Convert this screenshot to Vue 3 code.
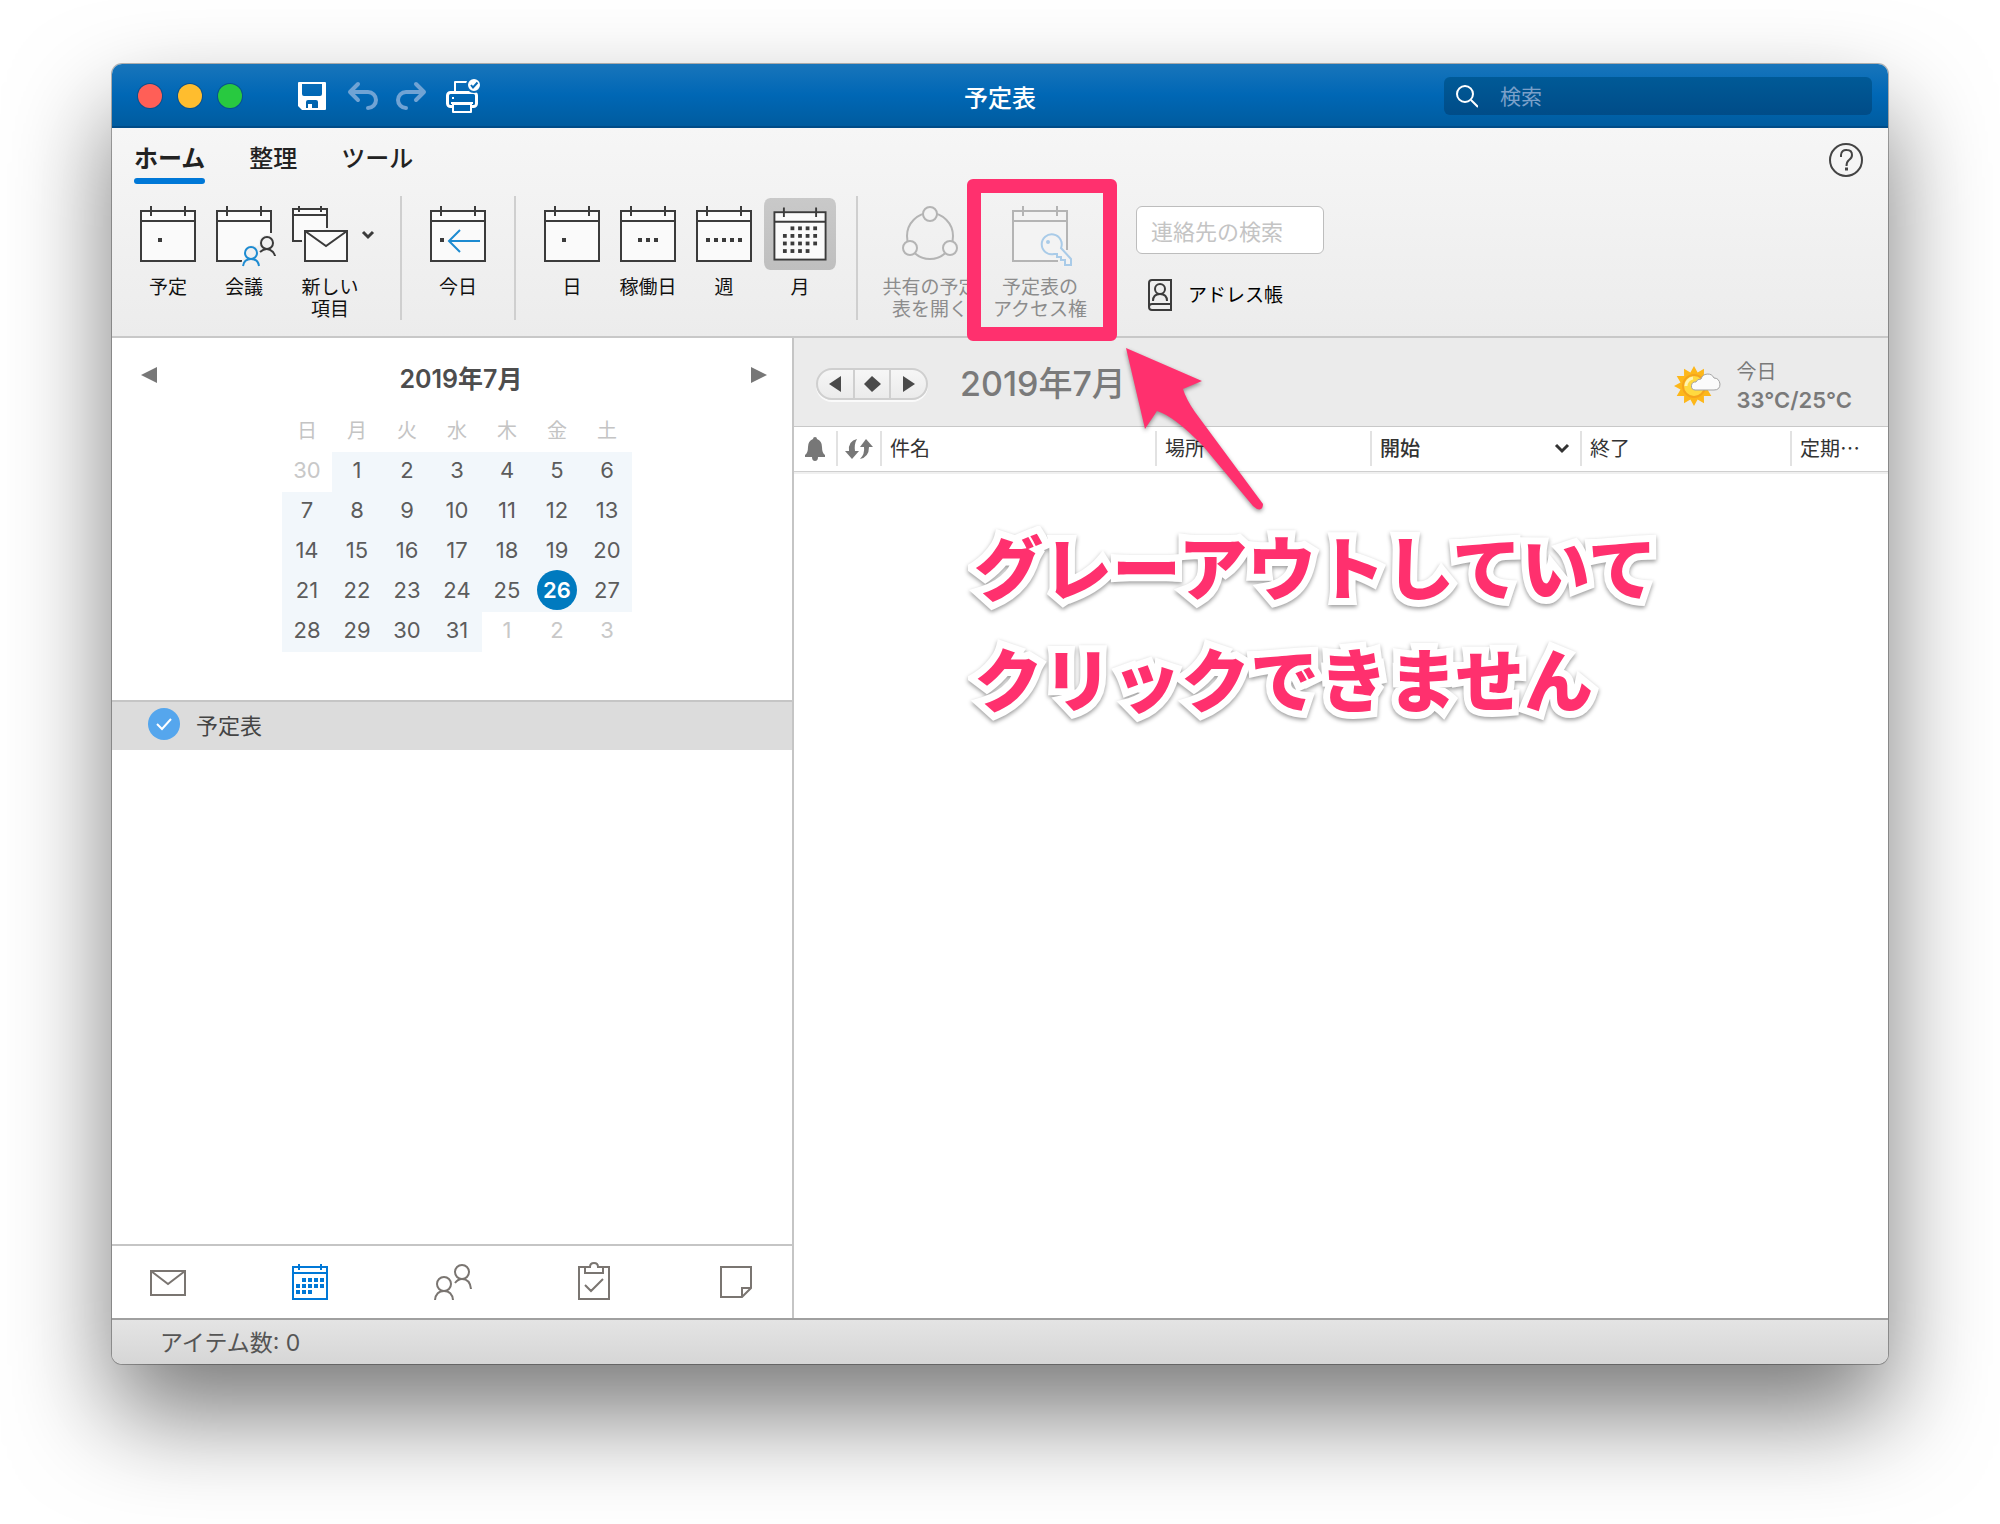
<script setup>
import { ref } from 'vue'

const tabs = ['ホーム', '整理', 'ツール']
const activeTab = ref('ホーム')
const view = ref('月')
const calendarOn = ref(true)

const row = (xs, y) => xs.map((x) => [x, y])
const views = [
  { name: '日', dots: row([28], 40) },
  { name: '稼働日', dots: row([28, 36, 44], 40) },
  { name: '週', dots: row([20, 28, 36, 44, 52], 40) },
  {
    name: '月',
    dots: [
      ...row([28, 36, 44, 52], 28),
      ...row([20, 28, 36, 44, 52], 36),
      ...row([20, 28, 36, 44, 52], 44),
      ...row([20, 28, 36, 44], 52),
    ],
  },
]

const weekdays = ['日', '月', '火', '水', '木', '金', '土']
const weeks = Array.from({ length: 5 }, (_, w) =>
  Array.from({ length: 7 }, (_, d) => {
    const n = w * 7 + d
    if (n === 0) return { day: 30, outside: true }
    if (n > 31) return { day: n - 31, outside: true }
    return { day: n, today: n === 26 }
  })
)

const navDots = [
  ...row([10, 16, 22, 28], 14),
  ...row([4, 10, 16, 22, 28], 20),
  ...row([4, 10, 16], 26),
]

const sunRays = Array.from({ length: 24 }, (_, i) => {
  const r = i % 2 ? 14 : 20
  const a = (i * Math.PI) / 12
  return `${(20 + r * Math.sin(a)).toFixed(1)},${(21 - r * Math.cos(a)).toFixed(1)}`
}).join(' ')
</script>

<template>
  <div class="desktop">
    <div class="window">
      <header class="titlebar">
        <div class="title-left">
          <div class="lights">
            <button class="light red" aria-label="閉じる"></button>
            <button class="light yellow" aria-label="最小化"></button>
            <button class="light green" aria-label="最大化"></button>
          </div>
          <div class="quick">
            <button aria-label="保存">
              <svg width="28" height="28" viewBox="0 0 28 28">
                <path fill="#fff" fill-rule="evenodd" d="M1 0H27Q28 0 28 1V27Q28 28 27 28H4L0 24V1Q0 0 1 0ZM4 2V12Q4 14 6 14H22Q24 14 24 12V2ZM8 26H10V22H14V26H20V20Q20 18 18 18H10Q8 18 8 20Z" />
              </svg>
            </button>
            <button aria-label="元に戻す">
              <svg width="30" height="28" viewBox="0 0 30 28" class="faded">
                <path d="M12 2 4 10l8 8M4 10H22a8 8 0 0 1 0 16" />
              </svg>
            </button>
            <button aria-label="やり直し">
              <svg width="30" height="28" viewBox="0 0 30 28" class="faded">
                <path d="M20 2l8 8-8 8M28 10H10a8 8 0 0 0 0 16" />
              </svg>
            </button>
            <button aria-label="印刷">
              <svg width="34" height="34" viewBox="0 0 34 34">
                <g fill="none" stroke="#fff" stroke-width="2" stroke-linejoin="round">
                  <path d="M9 13V3H21" />
                  <rect x="1.500" y="13.500" width="29" height="14" rx="3" stroke-width="3" />
                  <path d="M7 25H25V33H7Z" fill="#0063af" />
                </g>
                <path d="M5 24H27" stroke="#fff" stroke-width="2" />
                <rect x="6" y="18" width="2" height="2" fill="#fff" />
                <circle cx="28" cy="6" r="7" fill="#fff" stroke="#0a6cb7" stroke-width="2" />
                <path d="M25 6l2 2.500 4.500-5" fill="none" stroke="#0a6cb7" stroke-width="2" />
              </svg>
            </button>
          </div>
        </div>
        <h1>予定表</h1>
        <label class="search">
          <svg width="24" height="24" viewBox="0 0 24 24" fill="none" stroke="#fff" stroke-width="2">
            <circle cx="11" cy="10" r="8" /><path d="M17 16l7 7" />
          </svg>
          <input type="search" placeholder="検索" aria-label="検索" />
        </label>
      </header>

      <section class="ribbon">
        <div class="tab-row">
          <nav class="tabs">
            <button v-for="t in tabs" :key="t" :class="{ active: t === activeTab }" @click="activeTab = t">{{ t }}</button>
          </nav>
          <button class="help" aria-label="ヘルプ">
            <svg width="34" height="34" viewBox="0 0 34 34" fill="none" stroke="#444" stroke-width="2">
              <circle cx="17" cy="17" r="16" />
              <path d="M12 14v-2a5 5 0 0 1 6-5q5 0 5 5 0 3-3 5-2.500 2-2.500 6" />
              <path d="M16 26h3" stroke-width="3" />
            </svg>
          </button>
        </div>

        <div class="toolbar">
          <div class="group">
            <button class="tool">
              <svg width="76" height="72" viewBox="0 0 76 72" class="line">
                <rect x="11" y="13" width="54" height="50" class="paper" />
                <path d="M11 23H65M21 8V18M55 8V18" />
                <rect x="28" y="40" width="4" height="4" class="dot" />
              </svg>
              <span>予定</span>
            </button>
            <button class="tool">
              <svg width="76" height="72" viewBox="0 0 76 72" class="line">
                <path d="M36 63H11V13H65V35" class="paper" />
                <path d="M11 23H65M21 8V18M55 8V18" />
                <path d="M34 69Q36 60 40 59A7 7 0 1 1 52 50Q53 48 53 44A8 8 0 1 1 67 50Q71 54 71 60H53V69Z" class="halo" />
                <circle cx="61" cy="45" r="6" /><path d="M54 54Q61 48 67 54Q69 57 69 58" />
                <g class="blue"><circle cx="45" cy="55" r="6" /><path d="M37 68Q38 61 45 61Q52 61 53 68" /></g>
              </svg>
              <span>会議</span>
            </button>
            <button class="tool new-item">
              <svg width="96" height="72" viewBox="0 0 96 72" class="line">
                <path d="M20 43H11V11H45V30" class="paper" />
                <path d="M11 17H45M17 8V14M39 8V14" />
                <rect x="23" y="33" width="42" height="30" class="paper" />
                <path d="M23 33 44 48 65 33" />
                <path d="M81 34l5 5 5-5" stroke-width="3" />
              </svg>
              <span>新しい<br />項目</span>
            </button>
          </div>
          <div class="group">
            <button class="tool">
              <svg width="76" height="72" viewBox="0 0 76 72" class="line">
                <rect x="11" y="13" width="54" height="50" class="paper" />
                <path d="M11 23H65M21 8V18M55 8V18" />
                <rect x="20" y="40" width="4" height="4" class="dot" />
                <path d="M60 43H29M40 32 29 43 40 54" class="blue" />
              </svg>
              <span>今日</span>
            </button>
          </div>
          <div class="group">
            <button v-for="v in views" :key="v.name" class="tool" :class="{ chosen: v.name === view }" @click="view = v.name">
              <svg width="76" height="72" viewBox="0 0 76 72" class="line">
                <rect x="11" y="13" width="54" height="50" class="paper" />
                <path d="M11 23H65M21 8V18M55 8V18" />
                <rect v-for="[x, y] in v.dots" :key="x + '-' + y" :x="x" :y="y" width="4" height="4" class="dot" />
              </svg>
              <span>{{ v.name }}</span>
            </button>
          </div>
          <div class="group wide">
            <button class="tool" disabled>
              <svg width="76" height="72" viewBox="0 0 76 72" class="line">
                <circle cx="38" cy="38" r="23" />
                <circle cx="38" cy="16" r="7" class="paper" />
                <circle cx="18" cy="50" r="7" class="paper" />
                <circle cx="58" cy="50" r="7" class="paper" />
              </svg>
              <span>共有の予定<br />表を開く</span>
            </button>
            <button class="tool" disabled>
              <svg width="76" height="72" viewBox="0 0 76 72" class="line">
                <path d="M56 63H11V13H65V52" class="paper" />
                <path d="M11 23H65M21 8V18M55 8V18" />
                <path d="M57 54 69 64V69H61V64H57V60H52L46 58Z" class="halo" />
                <g class="blue">
                  <path d="M59 50 69 61V67H63V62H59V59H55V56H52A10 10 0 1 1 59 50Z" class="paper" />
                  <circle cx="46" cy="44" r="1" />
                </g>
              </svg>
              <span>予定表の<br />アクセス権</span>
            </button>
            <div class="callout-box"></div>
          </div>
          <div class="contacts">
            <input type="text" placeholder="連絡先の検索" aria-label="連絡先の検索" />
            <button>
              <svg width="24" height="32" viewBox="0 0 24 32" class="line">
                <path d="M23 1H4Q1 1 1 4V28Q1 31 4 31H23ZM1 28Q1 25 4 25H23" />
                <circle cx="12" cy="10" r="5" /><path d="M5 22Q5 15 12 15Q19 15 19 22" />
              </svg>
              <span>アドレス帳</span>
            </button>
          </div>
        </div>
      </section>

      <div class="body">
        <aside class="sidebar">
          <div class="month-head">
            <button aria-label="前の月"><svg width="16" height="16"><path d="M16 0V16L0 8Z" fill="#777" /></svg></button>
            <h2>2019年7月</h2>
            <button aria-label="次の月"><svg width="16" height="16"><path d="M0 0V16L16 8Z" fill="#777" /></svg></button>
          </div>
          <table class="mini">
            <thead>
              <tr><th v-for="d in weekdays" :key="d">{{ d }}</th></tr>
            </thead>
            <tbody>
              <tr v-for="(week, i) in weeks" :key="i">
                <td v-for="c in week" :key="c.day" :class="{ outside: c.outside, today: c.today }"><span>{{ c.day }}</span></td>
              </tr>
            </tbody>
          </table>
          <label class="cal-item">
            <span class="tick">
              <input v-model="calendarOn" type="checkbox" />
              <svg v-if="calendarOn" width="32" height="32" viewBox="0 0 32 32"><path d="M9 16l5 5 9-10" fill="none" stroke="#fff" stroke-width="2" /></svg>
            </span>
            予定表
          </label>
          <nav class="modules">
            <button aria-label="メール">
              <svg width="36" height="38" viewBox="0 0 36 38"><path d="M1 9H35V33H1ZM1 9 18 22 35 9" /></svg>
            </button>
            <button aria-label="予定表" class="current">
              <svg width="36" height="38" viewBox="0 0 36 38">
                <path d="M1 5H35V37H1ZM1 11H35M7 2V8M29 2V8" />
                <rect v-for="[x, y] in navDots" :key="x + '-' + y" :x="x" :y="y + 2" width="4" height="4" />
              </svg>
            </button>
            <button aria-label="連絡先">
              <svg width="38" height="38" viewBox="0 0 38 38">
                <circle cx="28" cy="10" r="7" /><path d="M21 21Q24 17 28 17Q36 17 37 27" />
                <circle cx="10" cy="22" r="7" /><path d="M1 38Q2 29 10 29Q18 29 19 38" />
              </svg>
            </button>
            <button aria-label="タスク">
              <svg width="36" height="38" viewBox="0 0 36 38">
                <path d="M8 5H1V37H31V5H24M7 5H12Q12 1 16 1Q20 1 20 5H25V11H7ZM7 23l6 6L25 17" />
              </svg>
            </button>
            <button aria-label="メモ">
              <svg width="32" height="38" viewBox="0 0 32 38"><path d="M1 5H31V26L22 35H1ZM22 35V26H31" /></svg>
            </button>
          </nav>
        </aside>

        <main class="content">
          <div class="content-head">
            <div class="pager">
              <button aria-label="前へ"><svg width="12" height="16"><path d="M12 0V16L0 8Z" /></svg></button>
              <button aria-label="今日"><svg width="17" height="16"><path d="M8 0 17 8 8 16 0 8Z" /></svg></button>
              <button aria-label="次へ"><svg width="12" height="16"><path d="M0 0V16L12 8Z" /></svg></button>
            </div>
            <h2>2019年7月</h2>
            <div class="weather">
              <svg width="48" height="42" viewBox="0 0 48 42">
                <polygon :points="sunRays" fill="#fdb71a" />
                <circle cx="20" cy="21" r="11" fill="#ffd93f" stroke="#f5a41c" stroke-width="2" />
                <path d="M12 21a8 8 0 0 1 7-8" fill="none" stroke="#fff3b0" stroke-width="3" />
                <path d="M21 25a4 4 0 0 1 1-8q1-3 5-3a7 7 0 0 1 13-1q5 0 6 6 0 6-6 6Z" fill="#fbfbfb" stroke="#a3a3a3" />
              </svg>
              <div><span>今日</span><strong>33°C/25°C</strong></div>
            </div>
          </div>
          <table class="list">
            <colgroup>
              <col class="c-icon" /><col class="c-icon" /><col /><col class="c-place" /><col class="c-time" /><col class="c-time" /><col class="c-repeat" />
            </colgroup>
            <thead>
              <tr>
                <th class="glyph"><div>
                  <svg width="20" height="24" viewBox="0 0 20 24" fill="#777" role="img" aria-label="アラーム"><path d="M8 2Q8 0 10 0Q12 0 12 2Q17 4 17 10Q17 16 20 18V20H13Q13 24 10 24Q7 24 7 20H0V18Q3 16 3 10Q3 4 8 2Z" /></svg>
                </div></th>
                <th class="glyph"><div>
                  <svg width="28" height="20" viewBox="0 0 28 20" fill="#777" role="img" aria-label="繰り返し"><path d="M12 0Q9 5 10 12H14L7 20 0 12H4Q3 2 12 0ZM15 20Q20 15 19 8H15L21 0 28 8H24Q24 18 15 20Z" /></svg>
                </div></th>
                <th><div>件名</div></th>
                <th><div>場所</div></th>
                <th class="sorted"><div>開始
                  <svg width="16" height="12" viewBox="0 0 16 12"><path d="M2 3l6 6 6-6" fill="none" stroke="#333" stroke-width="3" /></svg>
                </div></th>
                <th><div>終了</div></th>
                <th><div>定期⋯</div></th>
              </tr>
            </thead>
          </table>
        </main>
      </div>

      <footer class="status">アイテム数: 0</footer>

      <svg class="arrow" width="160" height="180" viewBox="0 0 160 180">
        <path d="M6 7 82 40 63 48Q66 58 75 71L143 163Q143 170 137 168L133 165 83 105Q54 75 37 70L25 88Z" fill="#ff306e" />
      </svg>
      <p class="note">グレーアウトしていて<br />クリックできません</p>
    </div>
  </div>
</template>

<style>
body {
  margin: 0;
  background: #fff;
}
</style>

<style scoped>
* {
  box-sizing: border-box;
}
.desktop {
  padding: 64px 112px 160px;
  overflow: hidden;
  font-family: Inter, "Noto Sans CJK JP", sans-serif;
  color: #222;
}
button,
input {
  font: inherit;
  color: inherit;
}
button {
  padding: 0;
  border: 0;
  background: none;
}
svg {
  display: block;
  flex: none;
}
h1,
h2,
p {
  margin: 0;
}
.window {
  position: relative;
  display: flex;
  flex-direction: column;
  min-height: calc(100vh - 224px);
  border-radius: 10px;
  background: #fff;
  box-shadow: 0 0 0 1px rgba(0, 0, 0, 0.28), 0 50px 100px rgba(0, 0, 0, 0.53);
}

.titlebar {
  display: grid;
  grid-template-columns: 1fr auto 1fr;
  align-items: center;
  height: 64px;
  padding: 2px 16px 0;
  border-bottom: 2px solid #004c88;
  border-radius: 10px 10px 0 0;
  background: linear-gradient(#1875bb, #0067b5 50%, #005c9f);
}
.title-left {
  display: flex;
  align-items: center;
  padding-left: 10px;
}
.lights {
  display: flex;
  gap: 16px;
}
.light {
  width: 24px;
  height: 24px;
  border-radius: 50%;
  box-shadow: 0 0 0 1px #08518f;
}
.red { background: #ff5f57; }
.yellow { background: #ffbd2e; }
.green { background: #28c940; }
.quick {
  display: flex;
  align-items: center;
  gap: 20px;
  margin-left: 56px;
}
.faded {
  overflow: visible;
  fill: none;
  stroke: #70a3d4;
  stroke-width: 4;
  stroke-linecap: round;
  stroke-linejoin: round;
}
.titlebar h1 {
  font-size: 24px;
  font-weight: 500;
  color: #fff;
}
.search {
  display: flex;
  align-items: center;
  gap: 22px;
  justify-self: end;
  width: 428px;
  height: 38px;
  padding: 0 10px;
  border-radius: 6px;
  background: linear-gradient(#005a97, #004c88);
}
.search input {
  flex: 1;
  min-width: 0;
  padding: 0;
  border: 0;
  outline: 0;
  background: none;
  font-size: 21px;
  color: #fff;
}
.search input::placeholder {
  color: #7ba0c9;
}

.ribbon {
  padding-bottom: 16px;
  border-bottom: 2px solid #c8c8c8;
  background: linear-gradient(#f6f6f6, #ececec);
}
.tab-row {
  display: flex;
  justify-content: space-between;
  height: 56px;
  padding: 0 25px 0 22px;
}
.tabs {
  display: flex;
  gap: 44px;
}
.tabs button {
  display: flex;
  flex-direction: column;
  gap: 4px;
  height: 56px;
  padding-top: 16px;
  font-size: 24px;
  font-weight: 500;
  line-height: 30px;
}
.tabs .active {
  font-weight: 700;
}
.tabs .active::after {
  content: "";
  flex: none;
  width: 100%;
  height: 6px;
  border-radius: 3px;
  background: #0078d7;
}
.help {
  align-self: flex-end;
  margin-bottom: 7px;
}
.toolbar {
  display: flex;
  height: 124px;
  margin-top: 12px;
}
.group {
  position: relative;
  display: flex;
  padding: 2px 18px 0;
  border-right: 2px solid #cfcfcf;
}
.group.wide {
  gap: 2px;
  padding-right: 42px;
  border-right: 0;
}
.tool {
  display: flex;
  flex-direction: column;
  align-items: center;
  justify-content: flex-start;
  gap: 7px;
  width: 76px;
  font-size: 19px;
  line-height: 22px;
  color: #111;
  white-space: nowrap;
}
.new-item {
  width: 96px;
  margin-right: 4px;
}
.wide .tool {
  width: 108px;
}
.line {
  overflow: visible;
  fill: none;
  stroke: #3b3b3b;
  stroke-width: 2;
}
.chosen .line {
  box-sizing: content-box;
  width: 72px;
  border: solid transparent;
  border-width: 0 2px;
  border-radius: 8px;
  background: linear-gradient(#c9c9c9, #bfbfbf) padding-box;
}
.paper {
  fill: #fafafa;
}
.dot {
  fill: #3b3b3b;
  stroke: none;
}
.halo {
  fill: #f1f1f1;
  stroke: none;
}
.blue {
  stroke: #1d8bd1;
}
.tool:disabled {
  color: #8c8c8c;
}
.tool:disabled .line {
  stroke: #b4b4b4;
}
.tool:disabled .paper {
  fill: #f3f3f3;
}
.tool:disabled .blue {
  stroke: #a9cbe8;
}
.callout-box {
  position: absolute;
  top: -17px;
  right: 19px;
  width: 150px;
  height: 162px;
  border: 14px solid #ff306e;
  border-radius: 6px;
}
.contacts {
  display: flex;
  flex-direction: column;
  align-items: flex-start;
  gap: 24px;
  padding-top: 10px;
}
.contacts input {
  width: 188px;
  height: 48px;
  padding: 4px 14px 0;
  border: 1px solid #bdbdbd;
  border-radius: 6px;
  background: #fff;
  font-size: 22px;
}
.contacts input::placeholder {
  color: #c4c4c4;
}
.contacts button {
  display: flex;
  align-items: center;
  gap: 16px;
  padding-left: 12px;
  font-size: 19px;
  line-height: 32px;
  color: #000;
}
.contacts span {
  padding-top: 2px;
}

.body {
  display: flex;
  flex: 1;
}
.sidebar {
  display: flex;
  flex: none;
  flex-direction: column;
  width: 682px;
  border-right: 2px solid #c5c5c5;
}
.month-head {
  display: flex;
  justify-content: space-between;
  padding: 24px 25px 0 29px;
}
.month-head button {
  height: 26px;
}
.month-head h2 {
  padding-left: 14px;
  font-size: 25px;
  font-weight: 600;
  line-height: 34px;
  color: #4d4d4d;
}
.mini {
  margin: 12px 0 48px 170px;
  border-collapse: collapse;
  table-layout: fixed;
  width: 350px;
  font-size: 22px;
  color: #5c5c5c;
  text-align: center;
}
.mini th {
  height: 44px;
  padding: 0 0 2px;
  font-size: 20px;
  font-weight: 400;
  color: #c4c4c4;
}
.mini td {
  height: 40px;
  padding: 0;
  background: #f2f7fb;
  line-height: 36px;
  vertical-align: top;
}
.mini .outside {
  background: none;
  color: #c8c8c8;
}
.mini .today span {
  display: block;
  width: 40px;
  height: 40px;
  margin: -2px auto 0;
  border-radius: 50%;
  background: #007abf;
  font-weight: 600;
  line-height: 40px;
  color: #fff;
}
.cal-item {
  display: flex;
  align-items: center;
  gap: 16px;
  height: 50px;
  padding: 0 36px 4px;
  border-top: 2px solid #c5c5c5;
  background: #dcdcdc;
  font-size: 22px;
  color: #444;
}
.tick {
  display: grid;
}
.tick > * {
  grid-area: 1 / 1;
  width: 32px;
  height: 32px;
  pointer-events: none;
}
.tick input {
  margin: 0;
  appearance: none;
  border-radius: 50%;
  background: #55a6ed;
}
.modules {
  display: flex;
  align-items: center;
  gap: 106px;
  height: 74px;
  margin-top: auto;
  padding: 0 0 2px 38px;
  border-top: 2px solid #c5c5c5;
}
.modules svg {
  fill: none;
  stroke: #7a7571;
  stroke-width: 2;
}
.modules .current svg {
  stroke: #0078d7;
}
.modules rect {
  fill: #0078d7;
  stroke: none;
}

.content {
  flex: 1;
  min-width: 0;
}
.content-head {
  display: flex;
  align-items: center;
  height: 89px;
  padding: 4px 36px 0 22px;
  border-bottom: 1px solid #c8c8c8;
  background: #ebebeb;
  color: #7a7a7a;
}
.pager {
  display: flex;
  width: 112px;
  height: 32px;
  border: 2px solid #cfcfcf;
  border-radius: 16px;
  background: linear-gradient(#f6f6f6, #ebebeb);
  box-shadow: 0 2px 0 #fafafa;
}
.pager button {
  display: flex;
  flex: 1;
  align-items: center;
  justify-content: center;
}
.pager button + button {
  border-left: 2px solid #cfcfcf;
}
.pager svg {
  fill: #4a4a4a;
}
.content-head h2 {
  margin-left: 32px;
  font-size: 34px;
  font-weight: 500;
  line-height: 40px;
}
.weather {
  display: flex;
  align-items: center;
  gap: 15px;
  margin-left: auto;
  padding-top: 4px;
}
.weather div {
  display: grid;
  font-size: 20px;
  line-height: 28px;
}
.weather strong {
  font-size: 22px;
  font-weight: 600;
}
.list {
  width: 100%;
  border-collapse: collapse;
  border-bottom: 1px solid #cfcfcf;
  box-shadow: 0 2px 0 #f0f0f0;
  table-layout: fixed;
  font-size: 20px;
  color: #333;
}
.c-icon { width: 44px; }
.c-place { width: 215px; }
.c-time { width: 210px; }
.c-repeat { width: 96px; }
.list th {
  padding: 4px 0 5px;
  font-weight: 400;
  text-align: left;
}
.list th div {
  display: flex;
  align-items: center;
  justify-content: space-between;
  height: 35px;
  padding: 0 10px 2px 8px;
  border-right: 2px solid #e2e2e2;
}
.list th:last-child div {
  border-right: 0;
}
.list .glyph div {
  justify-content: center;
  padding: 0;
}
.list .sorted {
  font-weight: 500;
}

.status {
  height: 46px;
  padding-left: 48px;
  border-top: 2px solid #a0a0a0;
  border-radius: 0 0 10px 10px;
  background: linear-gradient(#e4e4e4, #d6d6d6);
  font-size: 23px;
  line-height: 46px;
  color: #555;
}

.arrow {
  position: absolute;
  top: 277px;
  left: 1008px;
  filter: drop-shadow(0 2px 2px rgba(0, 0, 0, 0.4));
}
.note {
  position: absolute;
  top: 450px;
  left: 862px;
  font-size: 69px;
  font-weight: 900;
  line-height: 112px;
  white-space: nowrap;
  color: #ff306e;
  -webkit-text-stroke: 14px #fff;
  paint-order: stroke fill;
  stroke-linejoin: round;
  filter: drop-shadow(0 2px 2px rgba(0, 0, 0, 0.4));
}
</style>
